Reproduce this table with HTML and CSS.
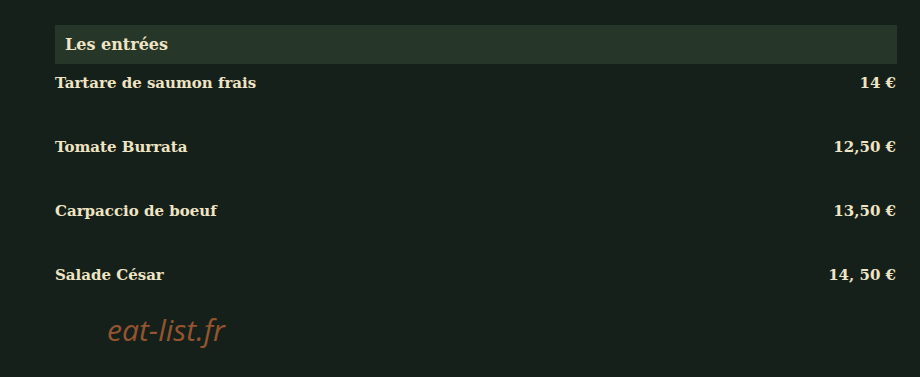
FILE: index.html
```html
<!DOCTYPE html>
<html lang="fr">
<head>
  <meta charset="UTF-8" />
  <title>Les entrées</title>
  <link rel="stylesheet" href="styles.css">
</head>
<body>

  <!-- Menu section -->
  <div class="menu">
    <div class="menu-title">Les entrées</div>

    <div class="dish">
      <span class="dish-name">Tartare de saumon frais</span>
      <span class="dish-price">14 €</span>
    </div>
    <div class="dish">
      <span class="dish-name">Tomate Burrata</span>
      <span class="dish-price">12,50 €</span>
    </div>
    <div class="dish">
      <span class="dish-name">Carpaccio de boeuf</span>
      <span class="dish-price">13,50 €</span>
    </div>
    <div class="dish">
      <span class="dish-name">Salade César</span>
      <span class="dish-price">14, 50 €</span>
    </div>
  </div>

  <!-- Watermark -->
  <div class="watermark">eat-list.fr</div>

</body>
</html>
```

FILE: styles.css
```css
/* ----- Reset ----- */
* {
  margin: 0;
  padding: 0;
  box-sizing: border-box;
}

html, body {
  width: 100%;
  height: 100%;
  overflow: hidden;
  background: #15201a;
}

body {
  padding: 25px 23px 0 55px;
  font-family: "DejaVu Serif", "Liberation Serif", serif;
  color: #efe4c4;
}

/* ----- Menu ----- */
.menu {
  display: flex;
  flex-direction: column;
}

.menu-title {
  height: 39px;
  padding-left: 10px;
  display: flex;
  align-items: center;
  background-color: #263628;
  font-size: 16px;
  font-weight: bold;
}

.dish {
  height: 36px;
  margin-top: 1px;
  margin-bottom: 27px;
  display: flex;
  align-items: center;
  justify-content: space-between;
  font-size: 15px;
  font-weight: bold;
}

.dish-price {
  padding-right: 1px;
}

/* ----- Watermark ----- */
.watermark {
  margin-top: -11px;
  padding-left: 52px;
  font-family: "Open Sans", sans-serif;
  font-style: italic;
  font-size: 30px;
  color: #94542f;
}
```
